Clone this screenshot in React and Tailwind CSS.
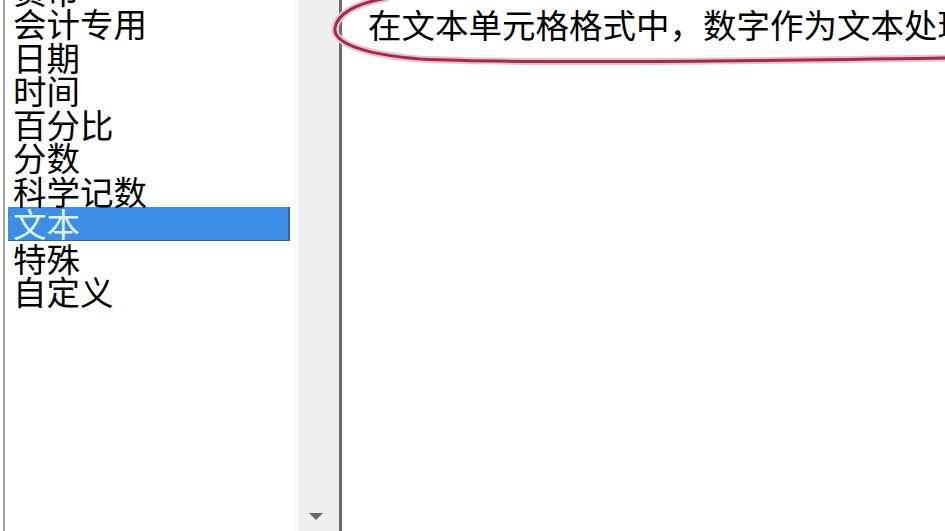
import React from "react";

const categories = [
  "货币",
  "会计专用",
  "日期",
  "时间",
  "百分比",
  "分数",
  "科学记数",
  "文本",
  "特殊",
  "自定义",
];

const selected = "文本";

const font = { fontFamily: '"Noto Sans CJK SC", "Noto Sans", sans-serif' };

const App = () => {
  return (
    <div
      className="relative flex w-[945px] h-[531px] overflow-hidden bg-white text-black"
      style={font}
    >
      {/* category list */}
      <div className="shrink-0 w-[3px] bg-white" />
      <div className="shrink-0 w-[2px] bg-[#a3a3a3]" />
      <div className="shrink-0 w-[290px] bg-white overflow-hidden">
        <ul className="mt-[-27.5px] pl-[3px]">
          {categories.map((c) => (
            <li
              key={c}
              className={
                c === selected
                  ? "w-[282px] h-[33.5px] pl-[5px] text-[33.5px] leading-[32px] bg-[#3c8ee6] text-[#dcf3ff] border-r-2 border-b-[1.5px] border-[#3f5f8c]"
                  : "w-[282px] h-[33.5px] pl-[5px] text-[33.5px] leading-[33.5px]"
              }
            >
              {c}
            </li>
          ))}
        </ul>
      </div>

      {/* scrollbar */}
      <div className="shrink-0 flex flex-col w-[44px] bg-[#efefef] border-l-[4px] border-[#f7f7f7]">
        <div className="flex-1" />
        <div className="flex h-[32px] justify-center pt-[13px] pr-[6px]">
          <svg width="16" height="10" viewBox="0 0 16 10">
            <polygon points="1,1 15,1 8,8" fill="#505050" opacity="0.85" />
          </svg>
        </div>
      </div>
      <div className="shrink-0 w-[3px] bg-[#6c6c6c]" />

      {/* description */}
      <div className="flex-1 min-w-0 overflow-hidden bg-white pl-[26px] pt-[7px]">
        <p className="whitespace-nowrap text-[33.5px] leading-[34px]">
          在文本单元格格式中，数字作为文本处理
        </p>
      </div>

      {/* hand-drawn highlight ellipse */}
      <svg
        className="absolute left-0 top-0 pointer-events-none"
        width="945"
        height="531"
        viewBox="0 0 945 531"
      >
        <path
          d="M 388 -2 C 356 3, 337 14, 335 28 C 333 42, 360 54, 420 59 C 520 64, 760 61, 947 58"
          fill="none"
          stroke="#ecc3cd"
          strokeWidth="7"
        />
        <path
          d="M 388 -2 C 356 3, 337 14, 335 28 C 333 42, 360 54, 420 59 C 520 64, 760 61, 947 58"
          fill="none"
          stroke="#9e2c4b"
          strokeWidth="3"
        />
      </svg>
    </div>
  );
};

export default App;
